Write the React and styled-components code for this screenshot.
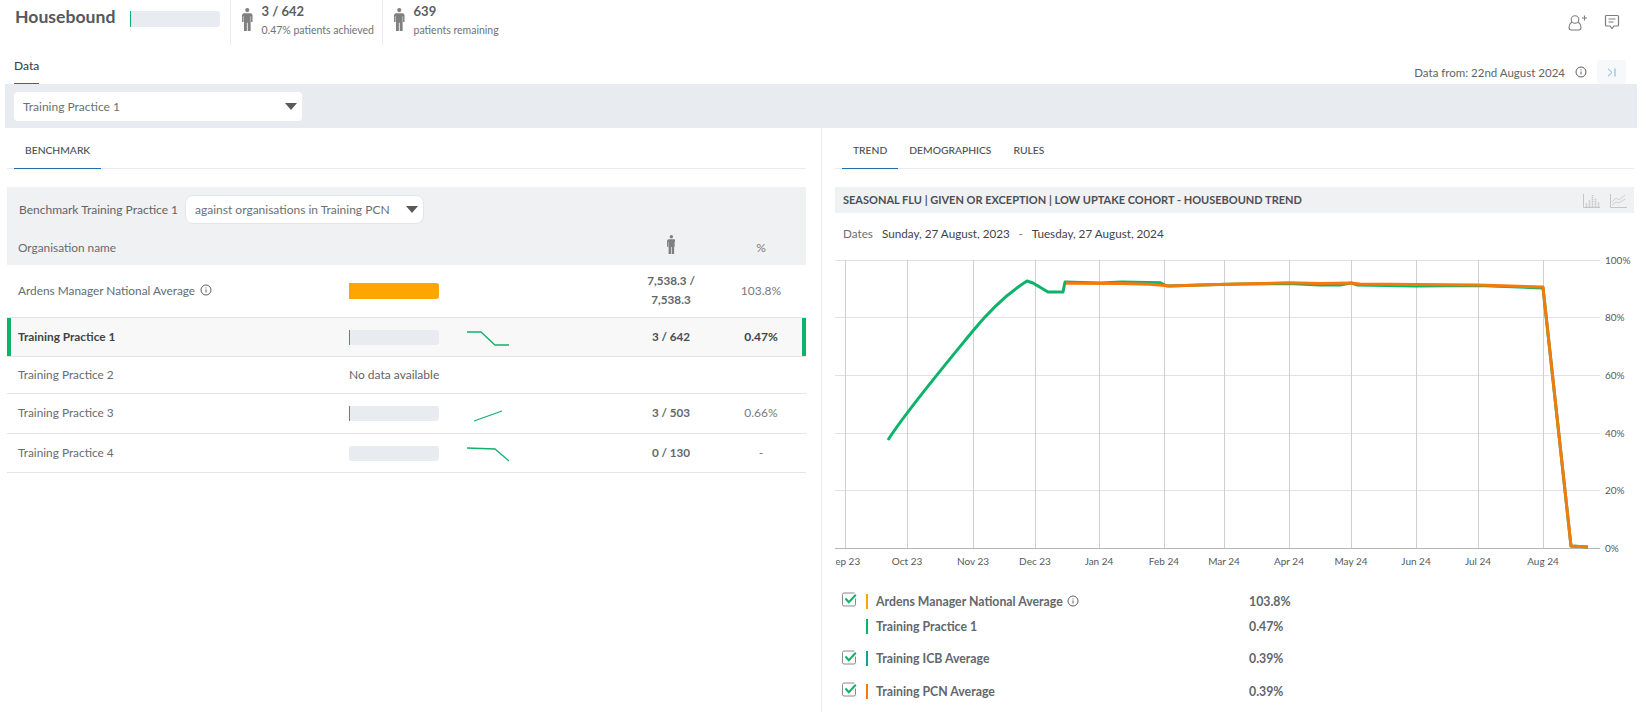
import React from "react";
import styled, { createGlobalStyle } from "styled-components";

const GlobalStyle = createGlobalStyle`
  html, body {
    margin: 0;
    padding: 0;
    background: #fff;
    overflow: hidden;
  }
  * {
    box-sizing: border-box;
  }
`;

const Page = styled.div`
  width: 1646px;
  height: 712px;
  overflow: hidden;
  font-family: "Lato", "Noto Sans", sans-serif;
  font-size: 12px;
  color: #5f6468;
`;

const Header = styled.header`
  height: 45px;
  display: flex;
  padding-left: 15px;
  padding-right: 26px;
`;

const Title = styled.h1`
  margin: 0;
  width: 115px;
  padding-top: 5px;
  font-size: 17.6px;
  line-height: 24px;
  font-weight: 700;
  color: #55595d;
`;

const Track = styled.div`
  width: ${(p) => p.$width || 90}px;
  height: ${(p) => p.$height || 15}px;
  background: #e8ecf0;
  border-radius: 3px;
  display: flex;
`;

const Fill = styled.div`
  height: 100%;
  background: ${(p) => p.$color || "#0db36a"};
  border-radius: ${(p) => (p.$full ? "0 3px 3px 0" : "0")};
`;

const HeaderBar = styled.div`
  padding-top: 11px;
  padding-right: 10px;
`;

const Stat = styled.div`
  width: 152px;
  border-left: 1px solid #e8ecf0;
  padding: 2px 0 0 11px;
  display: flex;
  gap: 9px;
  white-space: nowrap;
`;

const PersonWrap = styled.div`
  padding-top: 6px;
  color: #808080;
`;

const StatValue = styled.div`
  font-size: 13px;
  line-height: 18px;
  font-weight: 700;
  color: #5a5e62;
`;

const StatLabel = styled.div`
  font-size: 10.5px;
  line-height: 20px;
  color: #6d7377;
`;

const HeaderIcons = styled.div`
  margin-left: auto;
  display: flex;
  gap: 16px;
  padding-top: 14px;
  color: #7d7d7d;
`;

const DataRow = styled.div`
  height: 39px;
  display: flex;
  justify-content: space-between;
  padding: 0 20px 0 14px;
`;

const DataTab = styled.div`
  align-self: flex-end;
  height: 27px;
  width: 25px;
  font-size: 12px;
  font-weight: 500;
  line-height: 18px;
  color: #3f4448;
  border-bottom: 1px solid #1b6fb0;
  white-space: nowrap;
`;

const DataFrom = styled.div`
  display: flex;
  align-items: center;
  gap: 10px;
  font-size: 11.5px;
  color: #5f6468;
  padding-top: 15px;
`;

const CollapseButton = styled.div`
  width: 29px;
  height: 24px;
  background: #f6f8fa;
  border-radius: 3px;
  display: flex;
  align-items: center;
  justify-content: center;
  color: #7fb3dd;
`;

const Band = styled.div`
  height: 44px;
  margin: 0 9px 0 5px;
  padding-left: 9px;
  background: #e8ecf0;
  display: flex;
  align-items: center;
`;

const Select = styled.div`
  width: ${(p) => p.$width}px;
  height: 29px;
  padding: 0 5px 0 9px;
  display: flex;
  align-items: center;
  justify-content: space-between;
  background: #fff;
  border-radius: ${(p) => p.$radius || 4}px;
  border: ${(p) => (p.$outlined ? "1px solid #e4e6e8" : "none")};
  color: #6a7074;
  font-size: 12px;
`;

const Caret = styled.span`
  width: 0;
  height: 0;
  border-left: 6px solid transparent;
  border-right: 6px solid transparent;
  border-top: 7px solid #5a5a5a;
`;

const Panels = styled.div`
  display: grid;
  grid-template-columns: 821px 1fr;
`;

const LeftPanel = styled.section`
  padding: 0 15px 0 7px;
`;

const RightPanel = styled.section`
  height: 584px;
  border-left: 1px solid #e8ecf0;
  padding: 0 12px 0 13px;
`;

const Tabs = styled.div`
  height: 41px;
  display: flex;
  padding-left: ${(p) => p.$inset}px;
  border-bottom: 1px solid #e8ecf0;
`;

const Tab = styled.div`
  height: 41px;
  padding: 4px 11px 0;
  display: flex;
  align-items: center;
  font-size: 10.3px;
  font-weight: 500;
  color: #4a4f53;
  border-bottom: 1px solid ${(p) => (p.$active ? "#1b6fb0" : "transparent")};
`;

const BenchHead = styled.div`
  margin-top: 18px;
  height: 78px;
  background: #f0f1f3;
`;

const BenchControls = styled.div`
  height: 44px;
  padding-left: 12px;
  display: flex;
  align-items: center;
  gap: 7px;
`;

const Row = styled.div`
  display: grid;
  grid-template-columns: 342px 262px 120px 60px 15px;
  align-items: center;
  height: ${(p) => p.$height}px;
  border-bottom: ${(p) => (p.$plain ? "none" : "1px solid #e2e4e6")};
  background: ${(p) => (p.$selected ? "#f8f8f8" : "transparent")};
  box-shadow: ${(p) =>
    p.$selected ? "inset 4px 0 0 #0db36a, inset -4px 0 0 #0db36a" : "none"};
`;

const Name = styled.div`
  padding: 0 0 2px 11px;
  display: flex;
  align-items: center;
  gap: 5px;
  font-size: 11.85px;
  font-weight: ${(p) => (p.$strong ? 700 : 400)};
  color: ${(p) => (p.$strong ? "#3f4448" : "#666c70")};
`;

const NoData = styled.div`
  padding-bottom: 2px;
`;

const BarCell = styled.div`
  display: flex;
  align-items: center;
  gap: 28px;
`;

const Count = styled.div`
  text-align: center;
  font-size: 11.7px;
  font-weight: 700;
  line-height: 19px;
  padding: 0 24px 2px;
  color: ${(p) => (p.$strong ? "#4a4e52" : "#62676b")};
`;

const Pct = styled.div`
  text-align: center;
  padding-bottom: 2px;
  font-weight: ${(p) => (p.$strong ? 700 : 400)};
  color: ${(p) => (p.$strong ? "#3f4448" : "#777c80")};
`;

const ChartTitle = styled.div`
  margin-top: 18px;
  height: 26px;
  padding: 0 7px 2px 8px;
  background: #f0f1f3;
  display: flex;
  align-items: center;
  justify-content: space-between;
  font-size: 11px;
  font-weight: 700;
  color: #4a4f53;
`;

const ChartTools = styled.div`
  display: flex;
  gap: 10px;
  padding-top: 2px;
  color: #c4c6c8;
`;

const Dates = styled.div`
  height: 41px;
  padding: 0 0 2px 8px;
  display: flex;
  align-items: center;
  font-size: 11.7px;
  color: #3f4448;
`;

const DatesLabel = styled.span`
  width: 39px;
  color: #6a7074;
`;

const DatesDash = styled.span`
  width: 22px;
  text-align: center;
  color: #777c80;
`;

const Legend = styled.div`
  margin-top: 10px;
  padding-left: 7px;
`;

const LegendRow = styled.div`
  height: ${(p) => p.$height}px;
  display: grid;
  grid-template-columns: 24px 2px 381px 1fr;
  align-items: center;
  font-size: 12.3px;
  font-weight: 700;
  color: #62676b;
`;

const Swatch = styled.div`
  width: 2px;
  height: 15px;
  background: ${(p) => p.$color};
`;

const LegendName = styled.div`
  padding-left: 8px;
  display: flex;
  align-items: center;
  gap: 4px;
`;

const Person = ({ size = 23 }) => (
  <svg width={size * 0.46} height={size} viewBox="0 0 10 22" fill="#808080">
    <circle cx="5" cy="2" r="2" />
    <path d="M2 5h6a2 2 0 0 1 2 2v6.500H8.600V8h-.4v14H5.400v-8h-.8v8H1.800V8h-.4v5.500H0V7a2 2 0 0 1 2-2z" />
  </svg>
);

const Info = ({ size = 12 }) => (
  <svg width={size} height={size} viewBox="0 0 12 12" fill="none" stroke="#5f5f5f" strokeWidth="1">
    <circle cx="6" cy="6" r="5" />
    <path d="M6 5.500v3M6 3.400v1" />
  </svg>
);

const AddUser = () => (
  <svg width="20" height="17" viewBox="0 0 20 17" fill="none" stroke="currentColor" strokeWidth="1.100">
    <circle cx="7" cy="5.500" r="3.800" />
    <path d="M3.800 8C1.800 9.500 1 11.500 1 13.500c0 1.500 1 2.500 2.500 2.500h7c1.500 0 2.500-1 2.500-2.500 0-2-.8-4-2.800-5.500" />
    <path d="M14 4h5M16.500 1.500v5" />
  </svg>
);

const Comment = () => (
  <svg width="16" height="16" viewBox="0 0 16 16" fill="none" stroke="currentColor" strokeWidth="1.200">
    <path d="M2.500 1.500h11a1 1 0 0 1 1 1v8.500a1 1 0 0 1-1 1H10l-2 2.500L6 12H2.500a1 1 0 0 1-1-1V2.500a1 1 0 0 1 1-1z" />
    <path d="M4.500 5h7M4.500 8h5" />
  </svg>
);

const Collapse = () => (
  <svg width="9" height="9" viewBox="0 0 9 9" fill="none" stroke="currentColor" strokeWidth="1">
    <path d="M1 .8 5 4.500 1 8.200M8 .5v8" />
  </svg>
);

const BarIcon = () => (
  <svg width="17" height="15" viewBox="0 0 17 15" fill="none" stroke="currentColor">
    <path d="M.5 1v13.500H17" />
    <path d="M3.500 14V10M6.500 14V7M9.500 14V2M12.500 14V5M15.500 14V9" strokeWidth="1.600" strokeDasharray="1.500 .7" />
  </svg>
);

const LineIcon = () => (
  <svg width="17" height="15" viewBox="0 0 17 15" fill="none" stroke="currentColor">
    <path d="M.5 1v13.500H17" />
    <path d="M2 9l4-4 3 2 6-5M2 12l4-3 3 1 6-4" strokeWidth=".8" />
  </svg>
);

const Check = () => (
  <svg width="15" height="15" viewBox="0 0 15 15" fill="none">
    <path d="M13.500 6.500v6a1.500 1.500 0 0 1-1.500 1.500H2a1.500 1.500 0 0 1-1.500-1.500v-10A1.500 1.500 0 0 1 2 1h10.500" stroke="#8a8a8a" />
    <path d="M3.500 6.500 6.800 10.200 13.800 2.800" stroke="#0db36a" strokeWidth="2" />
  </svg>
);

const Spark = ({ points }) => (
  <svg width="42" height="22" viewBox="0 0 42 22" fill="none">
    <polyline points={points} stroke="#0db36a" strokeWidth="1.300" />
  </svg>
);

const rows = [
  { name: "Ardens Manager National Average", info: true, height: 53, full: true, count: "7,538.3 / 7,538.3", pct: "103.8%" },
  { name: "Training Practice 1", selected: true, height: 39, fill: 1, spark: "0,6 14,6 28,19 42,19", count: "3 / 642", pct: "0.47%" },
  { name: "Training Practice 2", height: 37, empty: true },
  { name: "Training Practice 3", height: 40, fill: 1, spark: "7,18 35,8", count: "3 / 503", pct: "0.66%" },
  { name: "Training Practice 4", height: 39, fill: 0, spark: "0,6 28,7 42,19", count: "0 / 130", pct: "-" },
];

const legend = [
  { name: "Ardens Manager National Average", info: true, color: "#f9a602", value: "103.8%", check: true, height: 26 },
  { name: "Training Practice 1", color: "#0db36a", value: "0.47%", height: 25 },
  { name: "Training ICB Average", color: "#16a394", value: "0.39%", check: true, height: 39 },
  { name: "Training PCN Average", color: "#f47a0c", value: "0.39%", check: true, height: 26 },
];

const yTicks = [
  { y: 260, label: "100%" },
  { y: 317, label: "80%" },
  { y: 375, label: "60%" },
  { y: 433, label: "40%" },
  { y: 490, label: "20%" },
  { y: 548, label: "0%" },
];

const xTicks = [
  [845, "Sep 23"],
  [907, "Oct 23"],
  [973, "Nov 23"],
  [1035, "Dec 23"],
  [1099, "Jan 24"],
  [1164, "Feb 24"],
  [1224, "Mar 24"],
  [1289, "Apr 24"],
  [1351, "May 24"],
  [1416, "Jun 24"],
  [1478, "Jul 24"],
  [1543, "Aug 24"],
];

// series in page coordinates, the group below shifts them by the svg origin
const OX = 835;
const OY = 254;

const greenLine =
  "M888 440C905 413 940 371 972 332C985 316 1005 295 1027 281L1033 283L1048 292L1063 292L1065 282L1100 283L1122 282L1160 282.700L1167 286L1200 285L1240 284L1289 283.500L1320 285L1340 285L1351 283L1358 285L1416 286L1478 285.500L1543 288L1571 546L1588 547";

const orangeLine =
  "M1066 283.300L1120 283.600L1150 284.300L1170 286L1227 284.300L1289 282.700L1320 283.500L1351 283L1360 284L1416 284.500L1478 285L1543 287L1571 546L1588 547";

const TrendChart = () => (
  <svg width="799" height="324" viewBox="0 0 799 324" style={{ display: "block" }}>
    <defs>
      <clipPath id="plot-clip">
        <rect x="1" y="0" width="798" height="324" />
      </clipPath>
    </defs>
    {yTicks.map((t) => (
      <g key={t.label}>
        <line x1="0" x2="765" y1={t.y - OY + 0.5} y2={t.y - OY + 0.5} stroke={t.label === "0%" ? "#b4b6b8" : "#e2e2e2"} />
        <text x="770" y={t.y - OY + 3.500} fontSize="10" fill="#55595d" fontFamily="Lato, sans-serif">
          {t.label}
        </text>
      </g>
    ))}
    <g clipPath="url(#plot-clip)">
      {xTicks.map(([x, label]) => (
        <g key={label}>
          <line x1={x - OX + 0.5} x2={x - OX + 0.5} y1="6" y2="294" stroke="#cfcfcf" />
          <text x={x - OX} y="311" fontSize="10" fill="#55595d" textAnchor="middle" fontFamily="Lato, sans-serif">
            {label}
          </text>
        </g>
      ))}
    </g>
    <g transform={`translate(${-OX} ${-OY})`} fill="none" strokeWidth="3" strokeLinejoin="round">
      <path d={greenLine} stroke="#0db36a" />
      <path d={orangeLine} stroke="#f47a0c" />
    </g>
  </svg>
);

export default function App() {
  return (
    <Page>
      <GlobalStyle />
      <Header>
        <Title>Housebound</Title>
        <HeaderBar>
          <Track $height={16}>
            <Fill style={{ width: "1px" }} />
          </Track>
        </HeaderBar>
        <Stat>
          <PersonWrap>
            <Person />
          </PersonWrap>
          <div>
            <StatValue>3 / 642</StatValue>
            <StatLabel>0.47% patients achieved</StatLabel>
          </div>
        </Stat>
        <Stat>
          <PersonWrap>
            <Person />
          </PersonWrap>
          <div>
            <StatValue>639</StatValue>
            <StatLabel>patients remaining</StatLabel>
          </div>
        </Stat>
        <HeaderIcons>
          <AddUser />
          <Comment />
        </HeaderIcons>
      </Header>

      <DataRow>
        <DataTab>Data</DataTab>
        <DataFrom>
          Data from: 22nd August 2024
          <Info />
          <CollapseButton>
            <Collapse />
          </CollapseButton>
        </DataFrom>
      </DataRow>

      <Band>
        <Select $width={288}>
          Training Practice 1
          <Caret />
        </Select>
      </Band>

      <Panels>
        <LeftPanel>
          <Tabs $inset={7}>
            <Tab $active>BENCHMARK</Tab>
          </Tabs>
          <BenchHead>
            <BenchControls>
              Benchmark Training Practice 1
              <Select $width={239} $radius={8} $outlined>
                against organisations in Training PCN
                <Caret />
              </Select>
            </BenchControls>
            <Row $height={34} $plain>
              <Name>Organisation name</Name>
              <div />
              <Count>
                <Person size={19} />
              </Count>
              <Pct>%</Pct>
            </Row>
          </BenchHead>
          {rows.map((r) => (
            <Row key={r.name} $height={r.height} $selected={r.selected}>
              <Name $strong={r.selected}>
                {r.name}
                {r.info && <Info />}
              </Name>
              {r.empty ? (
                <NoData>No data available</NoData>
              ) : (
                <BarCell>
                  <Track $height={r.full ? 16 : 15}>
                    {r.full ? (
                      <Fill $full $color="#ffa500" style={{ width: "100%" }} />
                    ) : (
                      <Fill style={{ width: `${r.fill}px` }} />
                    )}
                  </Track>
                  {r.spark && <Spark points={r.spark} />}
                </BarCell>
              )}
              <Count $strong={r.selected}>{r.count}</Count>
              <Pct $strong={r.selected}>{r.pct}</Pct>
            </Row>
          ))}
        </LeftPanel>

        <RightPanel>
          <Tabs $inset={7}>
            <Tab $active>TREND</Tab>
            <Tab>DEMOGRAPHICS</Tab>
            <Tab>RULES</Tab>
          </Tabs>
          <ChartTitle>
            SEASONAL FLU | GIVEN OR EXCEPTION | LOW UPTAKE COHORT - HOUSEBOUND TREND
            <ChartTools>
              <BarIcon />
              <LineIcon />
            </ChartTools>
          </ChartTitle>
          <Dates>
            <DatesLabel>Dates</DatesLabel>
            Sunday, 27 August, 2023
            <DatesDash>-</DatesDash>
            Tuesday, 27 August, 2024
          </Dates>
          <TrendChart />
          <Legend>
            {legend.map((l) => (
              <LegendRow key={l.name} $height={l.height}>
                <div>{l.check && <Check />}</div>
                <Swatch $color={l.color} />
                <LegendName>
                  {l.name}
                  {l.info && <Info />}
                </LegendName>
                <div>{l.value}</div>
              </LegendRow>
            ))}
          </Legend>
        </RightPanel>
      </Panels>
    </Page>
  );
}
